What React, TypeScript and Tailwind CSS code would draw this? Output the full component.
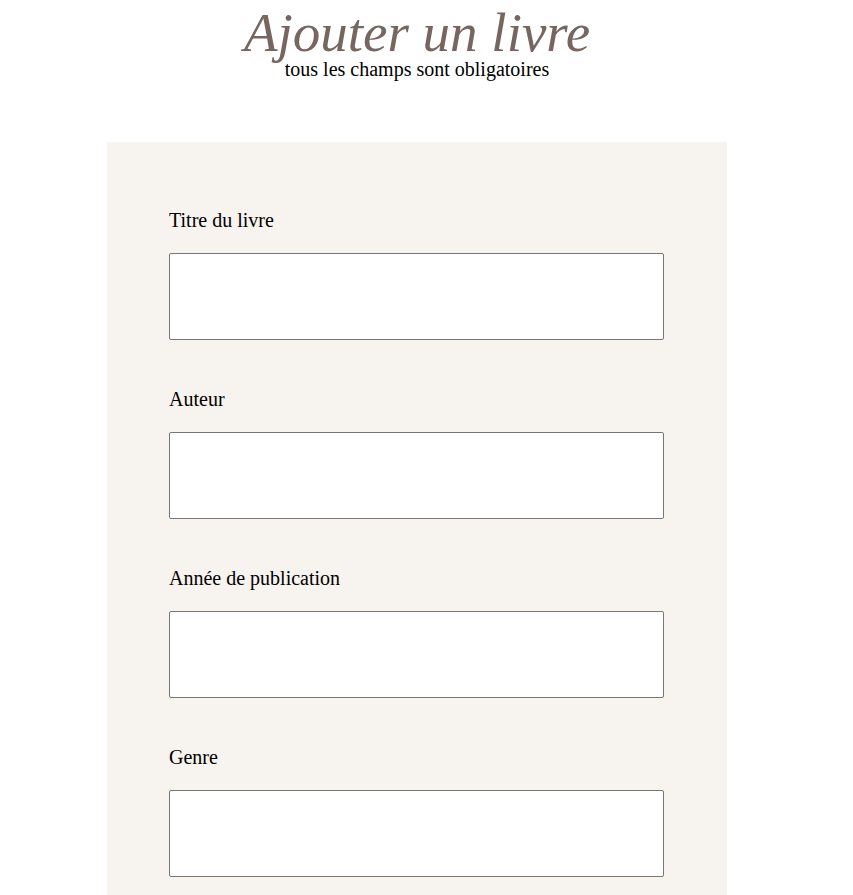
import React from 'react';

const fields = ['Titre du livre', 'Auteur', 'Année de publication', 'Genre'];

export default function App() {
  return (
    <div className="min-h-screen bg-white font-['Liberation_Serif',serif] text-black">
      <div className="w-[834px]">
        {/* Header */}
        <div className="flex flex-col items-center pt-[8px]">
          <h1 className="text-[55px] italic leading-[50px] text-[#776560]">Ajouter un livre</h1>
          <p className="text-[20px] leading-[23px]">tous les champs sont obligatoires</p>
        </div>

        {/* Form panel */}
        <div className="mx-auto mt-[61px] w-[620px] bg-[#f7f3ee] px-[62px] pt-[67px] pb-[40px]">
          {fields.map((label, i) => (
            <div key={label} className={i > 0 ? 'mt-[48px]' : ''}>
              <label className="block text-[20px] leading-[23px]">{label}</label>
              <input
                type="text"
                className="mt-[21px] block h-[87px] w-[495px] rounded-[2px] border border-[#767676] bg-white"
              />
            </div>
          ))}
        </div>
      </div>
    </div>
  );
}
